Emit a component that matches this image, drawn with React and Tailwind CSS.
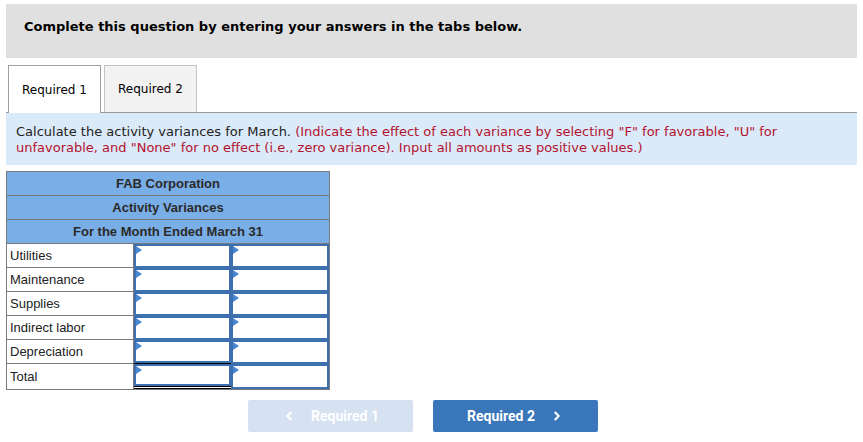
import React from "react";
import { ChevronLeft, ChevronRight } from "lucide-react";

const verdana = { fontFamily: '"DejaVu Sans", Verdana, sans-serif' };
const arial = { fontFamily: '"Liberation Sans", Arial, sans-serif' };
const roboto = { fontFamily: 'Roboto, "Liberation Sans", Arial, sans-serif' };

function InputCell({ w, bottom }) {
  const inner = (
    <div className="relative h-full w-full border-2 border-[#3e6fae] bg-white">
      <div className="absolute left-0 top-0 h-0 w-0 border-y-[4px] border-l-[6px] border-y-transparent border-l-[#4a86cf]" />
    </div>
  );
  let wrap = "h-full";
  if (bottom === "single") wrap = "h-full border-b border-black";
  if (bottom === "double") wrap = "h-full border-b-[3px] border-double border-black";
  return (
    <div className={w}>
      <div className={wrap}>{inner}</div>
    </div>
  );
}

const rows = ["Utilities", "Maintenance", "Supplies", "Indirect labor", "Depreciation"];

export default function App() {
  return (
    <div className="min-h-[442px] w-[863px] bg-white px-[6px] pt-[4px] text-[#222]">
      <div
        className="h-[54px] bg-[#e0e0e0] pl-[18px] pt-[13px] text-[13px] font-bold text-black"
        style={verdana}
      >
        Complete this question by entering your answers in the tabs below.
      </div>

      <div className="mt-[7px] flex h-[48px] items-end gap-[3px] border-b border-[#9a9a9a] pl-[2px]" style={verdana}>
        <div className="-mb-px flex h-[48px] w-[93px] items-center justify-center border border-b-0 border-[#a0a0a0] bg-white text-[12px] text-black">
          Required 1
        </div>
        <div className="flex h-[47px] w-[93px] items-center justify-center border border-b-0 border-[#c4c4c4] bg-[#f2f2f2] text-[12px] text-black">
          Required 2
        </div>
      </div>

      <div className="bg-[#dbeaf8] px-[10px] pb-[9px] pt-[11px] text-[13px] leading-[16px] text-[#222]" style={verdana}>
        Calculate the activity variances for March.{" "}
        <span className="text-[#b3122f]">
          (Indicate the effect of each variance by selecting "F" for favorable, "U" for
          <br />
          unfavorable, and "None" for no effect (i.e., zero variance). Input all amounts as positive values.)
        </span>
      </div>

      <div className="mt-[6px] w-[324px] border border-[#7a7a7a] text-[13px]" style={arial}>
        {["FAB Corporation", "Activity Variances", "For the Month Ended March 31"].map((t) => (
          <div
            key={t}
            className="flex h-[24px] items-center justify-center border-b border-[#7a7a7a] bg-[#7aaee6] font-bold text-[#2a2a2a]"
          >
            {t}
          </div>
        ))}
        {rows.map((r, i) => (
          <div key={r} className="flex h-[24px]">
            <div className="flex w-[127px] items-center border-b border-r border-[#7a7a7a] pl-[3px] text-[#222]">
              {r}
            </div>
            <InputCell w="w-[97px]" bottom={i === 4 ? "single" : undefined} />
            <InputCell w="w-[98px]" />
          </div>
        ))}
        <div className="flex h-[25px]">
          <div className="flex w-[127px] items-center border-r border-[#7a7a7a] pl-[3px] text-[#222]">
            Total
          </div>
          <InputCell w="w-[97px]" bottom="double" />
          <InputCell w="w-[98px]" />
        </div>
      </div>

      <div className="mt-[10px] flex gap-[20px] pl-[242px]" style={roboto}>
        <div className="flex h-[32px] w-[165px] items-center justify-center gap-[15px] rounded-[2px] bg-[#d6e2f1] text-[14px] font-bold text-white">
          <ChevronLeft size={14} strokeWidth={3.5} />
          <span>Required 1</span>
        </div>
        <div className="flex h-[32px] w-[165px] items-center justify-center gap-[15px] rounded-[2px] bg-[#3a76ba] text-[14px] font-bold text-white">
          <span>Required 2</span>
          <ChevronRight size={14} strokeWidth={3.5} />
        </div>
      </div>
    </div>
  );
}
